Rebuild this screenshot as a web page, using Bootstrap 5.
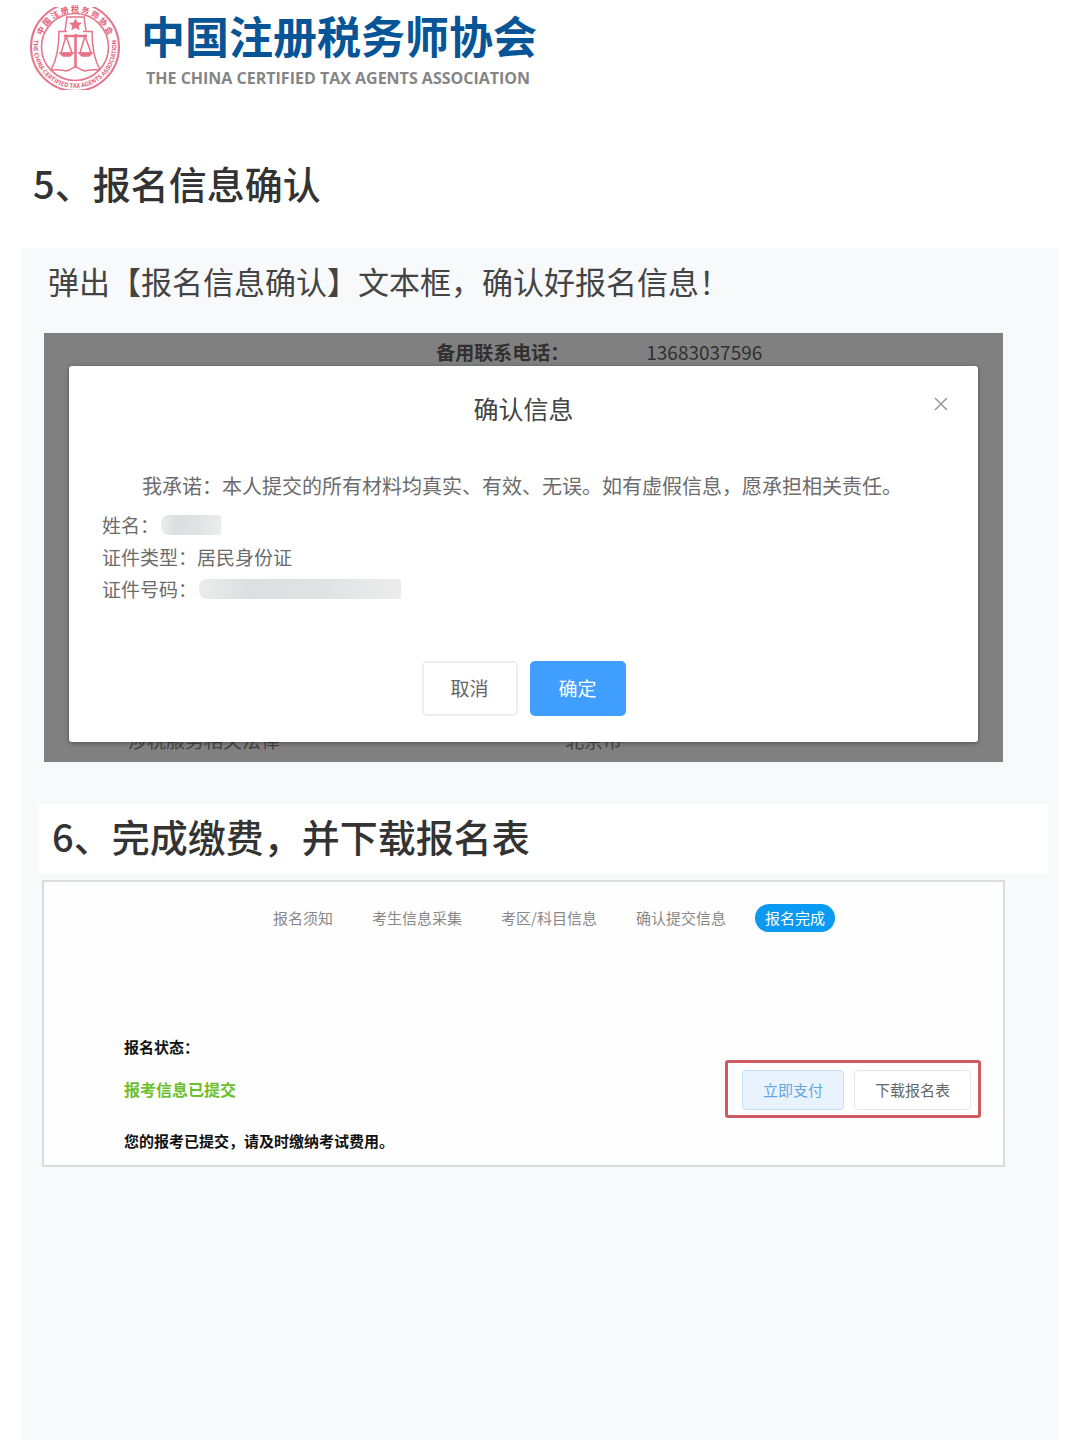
<!DOCTYPE html>
<html lang="zh-CN">
<head>
<meta charset="utf-8">
<meta name="viewport" content="width=device-width, initial-scale=1">
<title>中国注册税务师协会 - 报名指南</title>
<link rel="stylesheet" href="https://cdn.jsdelivr.net/npm/bootstrap@5.3.0/dist/css/bootstrap.min.css">
<style>
  body { font-family: "Noto Sans CJK SC", sans-serif; color: #333; background: #fff; }
  .site-head { padding: 5px 30px 0; gap: 21px; }
  .seal { margin-top: 2px; overflow: visible; }
  .org-name { font-size: 44px; line-height: 60px; font-weight: 700; color: #075596; }
  .org-sub { font-family: "Open Sans", "Noto Sans", sans-serif; font-size: 16px; line-height: 26px; font-weight: 700; color: #858585; padding-left: 5px; }
  .step-title { font-size: 38px; line-height: 56px; font-weight: 500; color: #333; }
  .step-first { margin: 64px 33px 37px; }
  .step-band { background: #fff; margin: 42px 10px 6px 16px; padding: 4px 14px 10px; }
  .guide { background: #f7f9fa; margin: 0 22px; }
  .guide-text { font-size: 31px; line-height: 46px; color: #444; padding: 10px 26px 29px; }
  .shot { margin: 0 55px 0 22px; padding: 33px 25px 20px; background: #808080; }
  .under { font-size: 19px; line-height: 28px; color: #303030; padding: 5px 25px 8px 0; }
  .under-top { padding-left: 42%; gap: 77px; }
  .under-bottom { padding-left: 9%; gap: 285px; color: #444; }
  .dialog-box { background: #fff; border-radius: 3px; box-shadow: 0 1px 4px rgba(0,0,0,.4); padding: 24px 33px 26px; font-size: 19px; line-height: 32px; color: #6b6b6b; }
  .dialog-title { font-size: 25px; line-height: 36px; color: #444; font-weight: 400; }
  .close-btn { top: 30px; right: 29px; line-height: 0; }
  .pledge { font-size: 20px; text-indent: 2em; margin: 44px 0 7px; }
  .veil { height: 20px; border-radius: 8px 2px 2px 8px; background: linear-gradient(90deg, #ececec, #dcdfe0 25%, #e0e2e3 60%, #ececec); }
  .veil-name { width: 60px; margin-left: 2px; }
  .veil-id { width: 202px; margin-left: 2px; }
  .act { width: 96px; height: 55px; font-size: 19px; border-radius: 5px; }
  .act-cancel { color: #666; border: 2px solid #eee; background: #fff; }
  .act-ok { color: #fff; background: #409eff; }
  .act-row { gap: 12px; margin-top: 56px; }
  .result { background: #fefefe; border: 2px solid #d8dddd; margin: 0 53px 0 20px; padding: 22px 22px 12px 80px; }
  .steps { gap: 19px; padding-left: 139px; font-size: 15px; line-height: 28px; }
  .steps a { color: #888; padding: 0 10px; text-decoration: none; }
  .steps a.on { color: #fff; background: #0a9af2; border-radius: 14px; }
  .state { margin-top: 103px; font-size: 15px; line-height: 24px; font-weight: 700; color: #111; }
  .state-ok { font-size: 16px; color: #6cbf2d; margin: 18px 0 28px; }
  .pay-frame { border: 3px solid #cf5a5f; border-radius: 3px; padding: 7px 7px 5px 14px; gap: 10px; margin-bottom: 35px; }
  .pay-frame .btn { font-size: 15px; height: 40px; border-radius: 4px; padding: 0 20px; }
  .pay-now { color: #63a5de; background: #e8f3fe; border: 1px solid #c3dff7; }
  .get-form { color: #666; background: #fff; border: 1px solid #e6e6e6; }
</style>
<script src="https://cdn.jsdelivr.net/npm/bootstrap@5.3.0/dist/js/bootstrap.bundle.min.js"></script>
</head>
<body class="min-vh-100 d-flex flex-column">
<header class="site-head d-flex align-items-start">
  <svg class="seal" width="90" height="83" viewBox="30 7 90 83" fill="none" stroke="#e8748a" stroke-width="1.500" aria-hidden="true">
    <clipPath id="sealCut"><path d="M29 7h92v83H29z"/></clipPath>
    <circle cx="75" cy="47" r="44" stroke-width="2" clip-path="url(#sealCut)"/>
    <circle cx="75" cy="47" r="33.500" stroke-width="1.600"/>
    <path d="M66 17h19M67 17l-2 14M84 17l2 14M58 31.500h9M83 31.500h10M59 31.500C59 47 56 61 51 70M92 31.500C92 47 95 61 100 70M51 70c8-1 11 0 15 1 5-1 7-4 9.500-4s5 3 9.500 4c4-1 7-2 15-1"/>
    <path d="M64 36h23M75.500 34v33" stroke-width="2.600"/>
    <path d="M66 36l-5 17h11zM85 36l-5 17h11z"/>
    <path d="M60 53h13l-3 3h-7zM79 53h13l-3 3h-7z" fill="#e8748a"/>
    <path d="M75.500 20l1.500 3 3.300.400-2.400 2.200.700 3.200-3.100-1.600-3.100 1.600.7-3.200-2.400-2.200 3.300-.4z" fill="#e8748a"/>
    <path id="arcTop" d="M40 47A35 35 0 0 1 110 47" stroke="none"/>
    <path id="arcLow" d="M34 40A41.500 41.500 0 1 0 116 40" stroke="none"/>
    <g stroke="none" fill="#e2607a">
      <text font-size="8" font-weight="700" text-anchor="middle"><textPath href="#arcTop" startOffset="50%">中 国 注 册 税 务 师 协 会</textPath></text>
      <text font-size="6" font-weight="700" text-anchor="middle"><textPath href="#arcLow" startOffset="50%">THE CHINA CERTIFIED TAX AGENTS ASSOCIATION</textPath></text>
    </g>
  </svg>
  <div>
    <div class="org-name">中国注册税务师协会</div>
    <div class="org-sub">THE CHINA CERTIFIED TAX AGENTS ASSOCIATION</div>
  </div>
</header>

<h1 class="step-title step-first">5、报名信息确认</h1>

<main class="guide flex-grow-1">
  <p class="guide-text mb-0">弹出【报名信息确认】文本框，确认好报名信息！</p>

  <section class="shot position-relative">
    <div class="under position-absolute top-0 start-0 w-100 h-100 d-flex flex-column justify-content-between">
      <div class="under-top d-flex"><b>备用联系电话：</b><span>13683037596</span></div>
      <div class="under-bottom d-flex"><span>涉税服务相关法律</span><span>北京市</span></div>
    </div>
    <div class="dialog-box position-relative" role="dialog" aria-labelledby="dlgTitle">
      <h2 class="dialog-title text-center mb-0" id="dlgTitle">确认信息</h2>
      <button type="button" class="close-btn btn p-0 border-0 position-absolute" aria-label="关闭">
        <svg width="16" height="16" viewBox="0 0 16 16" stroke="#999" stroke-width="1.500"><path d="M2 2l12 12M14 2L2 14"/></svg>
      </button>
      <p class="pledge">我承诺：本人提交的所有材料均真实、有效、无误。如有虚假信息，愿承担相关责任。</p>
      <div class="d-flex align-items-center">姓名：<span class="veil veil-name"></span></div>
      <div>证件类型：居民身份证</div>
      <div class="d-flex align-items-center">证件号码：<span class="veil veil-id"></span></div>
      <div class="act-row d-flex justify-content-center">
        <button type="button" class="btn act act-cancel p-0">取消</button>
        <button type="button" class="btn act act-ok p-0">确定</button>
      </div>
    </div>
  </section>

  <div class="step-band"><h1 class="step-title mb-0">6、完成缴费，并下载报名表</h1></div>

  <section class="result">
    <nav class="steps d-flex">
      <a href="#">报名须知</a><a href="#">考生信息采集</a><a href="#">考区/科目信息</a><a href="#">确认提交信息</a><a href="#" class="on" aria-current="step">报名完成</a>
    </nav>
    <div class="d-flex justify-content-between align-items-end">
      <div class="state">
        <div>报名状态：</div>
        <div class="state-ok">报考信息已提交</div>
        <div>您的报考已提交，请及时缴纳考试费用。</div>
      </div>
      <div class="pay-frame d-flex">
        <button type="button" class="btn pay-now">立即支付</button>
        <button type="button" class="btn get-form">下载报名表</button>
      </div>
    </div>
  </section>
</main>
</body>
</html>
